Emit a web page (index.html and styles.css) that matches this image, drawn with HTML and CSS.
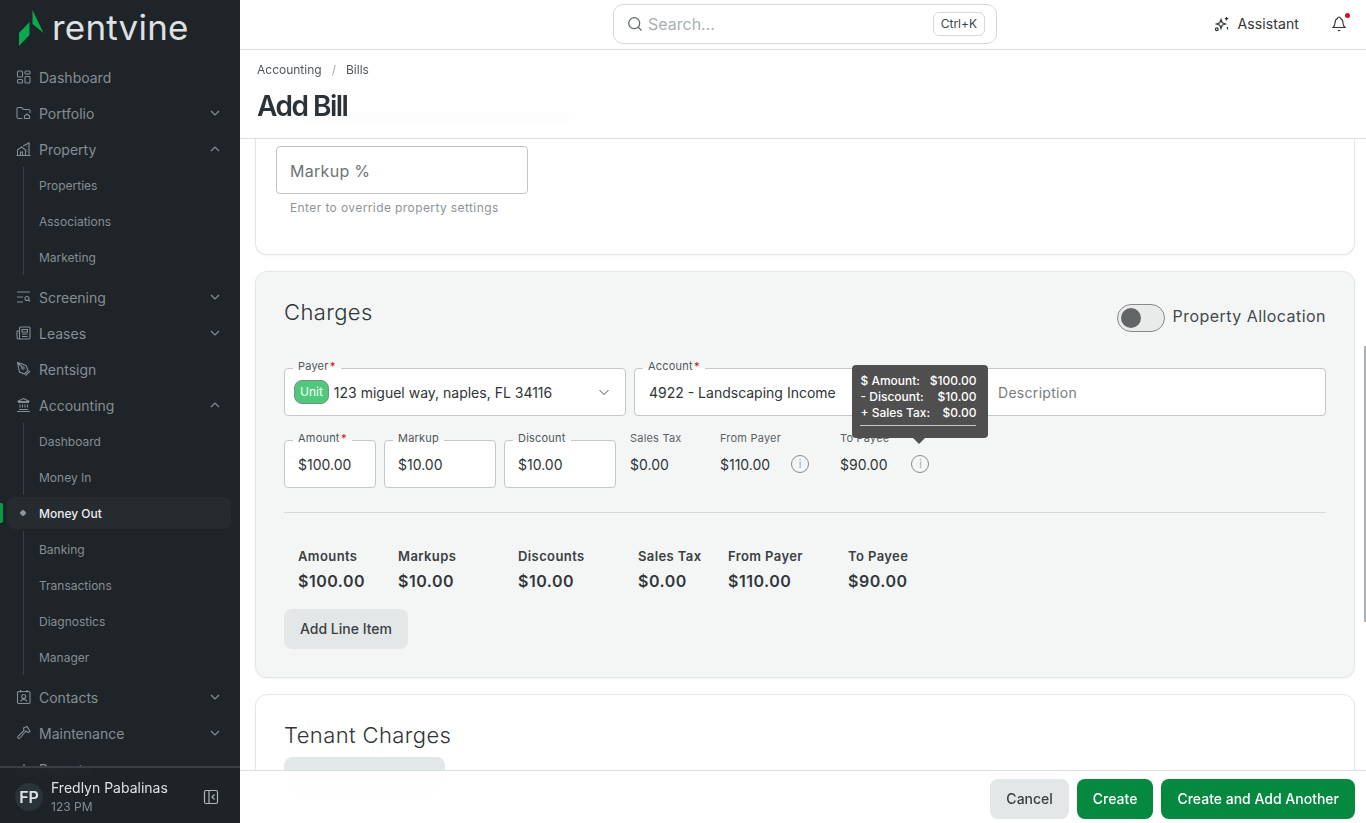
FILE: index.html
```html
<!DOCTYPE html>
<html lang="en">

<head>
    <meta charset="UTF-8">
    <meta name="viewport" content="width=device-width, initial-scale=1.0">
    <title>Add Bill</title>
    <link rel="stylesheet" href="styles.css">
</head>

<body>
    <div class="app">
        <!-- Sidebar -->
        <aside class="sidebar">
            <div class="logo">
                <svg class="logo-mark" viewBox="0 0 26 36" width="26" height="36">
                    <path d="M13.5 0 L24.5 23 L13.5 14 Z M10.5 12 V25 L0 36 V23 Z" fill="#0ba84f" />
                </svg>
                <span class="logo-text">rentvine</span>
            </div>
            <nav class="nav">
                <a class="nav-item">
                    <svg class="nav-icon" viewBox="0 0 16 16"><rect x="1.500" y="2" width="5" height="6" rx="1" /><rect x="9" y="2" width="5" height="3" rx="1" /><rect x="1.500" y="10.500" width="5" height="3.500" rx="1" /><rect x="9" y="7.500" width="5" height="6.500" rx="1" /></svg>
                    Dashboard
                </a>
                <a class="nav-item">
                    <svg class="nav-icon" viewBox="0 0 16 16"><path d="M6.500 13.500H2.500A1.500 1.500 0 0 1 1 12V3.500A1 1 0 0 1 2 2.500H5.500l2 2h5a1.500 1.500 0 0 1 1.500 1.500v2" /><path d="M8.500 11L11 9l2.500 2v2.500h-5z" /></svg>
                    Portfolio
                    <svg class="chevron" viewBox="0 0 12 12"><path d="M2 4l4 4 4-4" /></svg>
                </a>
                <a class="nav-item">
                    <svg class="nav-icon" viewBox="0 0 16 16"><path d="M.5 14.500h14M1.500 14.500V9l4-3 4 3v5.500M13 14.500V2L7 5M4.500 14.500V11h2v3.500M11 5.500v.5M11 8v.5M11 10.500v.5" /></svg>
                    Property
                    <svg class="chevron" viewBox="0 0 12 12"><path d="M2 8l4-4 4 4" /></svg>
                </a>
                <div class="sub-list">
                    <a class="sub-item">Properties</a>
                    <a class="sub-item">Associations</a>
                    <a class="sub-item">Marketing</a>
                </div>
                <a class="nav-item">
                    <svg class="nav-icon" viewBox="0 0 16 16"><path d="M1 3h13M1 8h6M1 13h6" /><circle cx="11" cy="9.500" r="2" /><path d="M12.500 11l1.500 1.500" /></svg>
                    Screening
                    <svg class="chevron" viewBox="0 0 12 12"><path d="M2 4l4 4 4-4" /></svg>
                </a>
                <a class="nav-item">
                    <svg class="nav-icon" viewBox="0 0 16 16"><path d="M3.500 13.500V3a1 1 0 0 1 1-1H13a1 1 0 0 1 1 1v9.500a1.500 1.500 0 0 1-1.500 1.500h-10A1.500 1.500 0 0 1 1 12.500V6h2.500" /><path d="M6 4.500h5.500v2.500H6zM6 9h5.500M6 11.500h5.500" /></svg>
                    Leases
                    <svg class="chevron" viewBox="0 0 12 12"><path d="M2 4l4 4 4-4" /></svg>
                </a>
                <a class="nav-item">
                    <svg class="nav-icon" viewBox="0 0 16 16"><path d="M1.500 1.500l8.500 3 2 5-3.500 3.500-5-2zM1.500 1.500L6 6" /><circle cx="7" cy="7" r="1.200" /><path d="M9.500 14.500L14 10" /></svg>
                    Rentsign
                </a>
                <a class="nav-item">
                    <svg class="nav-icon" viewBox="0 0 16 16"><path d="M1 14.500h13M2 5.500h11M7.500 1.500l6 3h-12zM3 12.500h9M4 7.500v3M6.500 7.500v3M9 7.500v3M11.500 7.500v3" /></svg>
                    Accounting
                    <svg class="chevron" viewBox="0 0 12 12"><path d="M2 8l4-4 4 4" /></svg>
                </a>
                <div class="sub-list">
                    <a class="sub-item">Dashboard</a>
                    <a class="sub-item">Money In</a>
                    <a class="sub-item sub-item--active">Money Out</a>
                    <a class="sub-item">Banking</a>
                    <a class="sub-item">Transactions</a>
                    <a class="sub-item">Diagnostics</a>
                    <a class="sub-item">Manager</a>
                </div>
                <a class="nav-item">
                    <svg class="nav-icon" viewBox="0 0 16 16"><rect x="1.500" y="2.500" width="12.500" height="12" rx="1.200" /><path d="M4.500 1v2.500M11 1v2.500M4.500 12.500c.5-1.500 1.700-2 3.200-2s2.800.5 3.300 2" /><circle cx="7.700" cy="7.500" r="2" /></svg>
                    Contacts
                    <svg class="chevron" viewBox="0 0 12 12"><path d="M2 4l4 4 4-4" /></svg>
                </a>
                <a class="nav-item">
                    <svg class="nav-icon" viewBox="0 0 16 16"><path d="M7.500 3L11 1.500l3 5-2 1-2-1.500-6 7a1.300 1.300 0 0 1-2-1.700l6-5.800z" /></svg>
                    Maintenance
                    <svg class="chevron" viewBox="0 0 12 12"><path d="M2 4l4 4 4-4" /></svg>
                </a>
                <a class="nav-item">
                    <svg class="nav-icon" viewBox="0 0 16 16"><path d="M3 14V8M8 14V3M13 14V6" /></svg>
                    Reports
                </a>
            </nav>
            <div class="user">
                <span class="avatar">FP</span>
                <div class="user-info">
                    <span class="user-name">Fredlyn Pabalinas</span>
                    <span class="user-org">123 PM</span>
                </div>
                <svg class="collapse" viewBox="0 0 16 16"><rect x="1.500" y="1.500" width="13" height="13" rx="1.500" /><path d="M6 1.500v13M11.500 5.500L9 8l2.500 2.500" /></svg>
            </div>
        </aside>

        <main class="main">
            <header class="topbar">
                <div class="search">
                    <svg class="search-icon" viewBox="0 0 16 16"><circle cx="7.200" cy="7.200" r="5.500" /><path d="M11.200 11.200L14.500 14.500" /></svg>
                    <span class="search-text">Search...</span>
                    <kbd class="kbd">Ctrl+K</kbd>
                </div>
                <div class="top-actions">
                    <a class="assistant">
                        <svg class="assistant-icon" viewBox="0 0 16 16"><path d="M7 3.500l1.200 3.300 3.300 1.200-3.300 1.200L7 12.500 5.800 9.200 2.500 8l3.300-1.200z" /><path d="M12.500 1v3.500M10.800 2.700h3.500M13.500 11v2.500" /><circle cx="2.800" cy="13.300" r="1.400" /></svg>
                        Assistant
                    </a>
                    <span class="bell">
                        <svg viewBox="0 0 16 16"><path d="M6.500 2.500a1.500 1.500 0 0 1 3 0c2 .8 2.500 2.500 2.500 4.500 0 2.500.8 3.500 2 4.500H2c1.200-1 2-2 2-4.500 0-2 .5-3.700 2.500-4.500zM6.800 14a1.400 1.400 0 0 0 2.400 0" /></svg>
                        <span class="bell-dot"></span>
                    </span>
                </div>
            </header>

            <div class="page-head">
                <div class="crumbs"><span>Accounting</span><span class="crumb-sep">/</span><span>Bills</span></div>
                <h1>Add Bill</h1>
            </div>

            <div class="content">
                <section class="card card--top">
                    <div class="ghost"></div>
                    <div class="field--markup">Markup %</div>
                    <p class="help">Enter to override property settings</p>
                </section>

                <section class="card card--charges">
                    <div class="charges-head">
                        <h2>Charges</h2>
                        <div class="toggle-wrap">
                            <span class="toggle"><span class="toggle-knob"></span></span>
                            <span class="toggle-text">Property Allocation</span>
                        </div>
                    </div>

                    <div class="row-top">
                        <div class="box box--payer">
                            <label class="box-label">Payer <b>*</b></label>
                            <span class="unit">Unit</span>
                            <span>123 miguel way, naples, FL 34116</span>
                            <svg class="select-arrow" viewBox="0 0 12 12"><path d="M1.500 4l4.500 4.500L10.500 4" /></svg>
                        </div>
                        <div class="box">
                            <label class="box-label">Account <b>*</b></label>
                            <span>4922 - Landscaping Income</span>
                        </div>
                        <div class="box box--desc">Description</div>
                    </div>

                    <div class="row-amounts">
                        <div class="box box--sm box--amount">
                            <label class="box-label">Amount <b>*</b></label>
                            $100.00
                        </div>
                        <div class="box box--sm box--wide">
                            <label class="box-label">Markup</label>
                            $10.00
                        </div>
                        <div class="box box--sm box--wide">
                            <label class="box-label">Discount</label>
                            $10.00
                        </div>
                        <div class="stat stat--tax">
                            <span class="stat-label">Sales Tax</span>
                            <span class="stat-value">$0.00</span>
                        </div>
                        <div class="stat stat--payer">
                            <span class="stat-label">From Payer</span>
                            <span class="stat-value">$110.00<span class="info">i</span></span>
                        </div>
                        <div class="stat stat--payee">
                            <span class="stat-label">To Payee</span>
                            <span class="stat-value">$90.00
                                <span class="info">i
                                    <span class="tooltip">
                                        <span class="tip-row"><span>$ Amount:</span><span>$100.00</span></span>
                                        <span class="tip-row"><span>- Discount:</span><span>$10.00</span></span>
                                        <span class="tip-row"><span>+ Sales Tax:</span><span>$0.00</span></span>
                                    </span>
                                </span>
                            </span>
                        </div>
                    </div>

                    <hr class="divider">

                    <div class="totals">
                        <div class="total total--1"><span>Amounts</span><strong>$100.00</strong></div>
                        <div class="total total--2"><span>Markups</span><strong>$10.00</strong></div>
                        <div class="total total--2"><span>Discounts</span><strong>$10.00</strong></div>
                        <div class="total total--3"><span>Sales Tax</span><strong>$0.00</strong></div>
                        <div class="total total--2"><span>From Payer</span><strong>$110.00</strong></div>
                        <div class="total"><span>To Payee</span><strong>$90.00</strong></div>
                    </div>

                    <button class="btn btn--grey btn--line" type="button">Add Line Item</button>
                </section>

                <section class="card card--tenant">
                    <h2>Tenant Charges</h2>
                    <button class="btn btn--grey btn--ghost" type="button"></button>
                </section>
            </div>

            <span class="scroll-thumb"></span>

            <footer class="bottom-bar">
                <button class="btn btn--grey" type="button">Cancel</button>
                <button class="btn btn--green" type="button">Create</button>
                <button class="btn btn--green" type="button">Create and Add Another</button>
            </footer>
        </main>
    </div>
</body>

</html>
```

FILE: styles.css
```css
* {
    box-sizing: border-box;
}

body {
    margin: 0;
    font-family: Inter, "Liberation Sans", sans-serif;
    color: #2f3437;
    background-color: #ffffff;
}

.app {
    display: flex;
    height: 823px;
    overflow: hidden;
}

/* Sidebar */
.sidebar {
    position: relative;
    display: flex;
    flex-direction: column;
    flex: 0 0 240px;
    height: 100%;
    overflow: hidden;
    background-color: #1e2428;
    color: #868e94;
}

.logo {
    display: flex;
    align-items: flex-start;
    flex: 0 0 59px;
    padding: 10px 0 0 19px;
}

.logo-mark {
    flex: none;
}

.logo-text {
    margin: -3px 0 0 7px;
    font-size: 35px;
    line-height: 40px;
    font-weight: 400;
    letter-spacing: 0.2px;
    color: #dde1e3;
}

.nav-item {
    display: flex;
    align-items: center;
    height: 36px;
    padding-left: 16px;
    font-size: 14px;
}

.nav-icon {
    flex: none;
    width: 16px;
    height: 16px;
    margin-right: 7px;
    fill: none;
    stroke: currentColor;
    stroke-width: 1.1;
}

.chevron {
    width: 12px;
    height: 12px;
    margin-left: auto;
    margin-right: 19px;
    fill: none;
    stroke: currentColor;
    stroke-width: 1.2;
}

.sub-list {
    margin-bottom: 4px;
}

.sub-item {
    position: relative;
    display: flex;
    align-items: center;
    height: 36px;
    padding-left: 39px;
    font-size: 12px;
}

.sub-item::before {
    content: "";
    position: absolute;
    left: 23px;
    top: 0;
    bottom: 0;
    border-left: 1px solid #394045;
}

/* current page: rounded row with dot, green mark at the edge */
.sub-item--active {
    z-index: 0;
    color: #eceef0;
    font-weight: 500;
}

.sub-item--active::before {
    z-index: -1;
    left: 7px;
    top: 2px;
    bottom: 2px;
    width: 224px;
    border-left: 0;
    border-radius: 8px;
    background: radial-gradient(circle at 16px 16px, #8b9298 2.500px, transparent 3px), #262b30;
}

.sub-item--active::after {
    content: "";
    position: absolute;
    left: 0;
    top: 8px;
    width: 3px;
    height: 20px;
    border-radius: 0 2px 2px 0;
    background-color: #0a9b49;
}

.user {
    position: absolute;
    left: 0;
    right: 0;
    bottom: 0;
    display: flex;
    align-items: center;
    height: 57px;
    padding: 3px 21px 0 15px;
    border-top: 2px solid #3a3f43;
    background-color: rgba(30, 36, 40, 0.93);
    backdrop-filter: blur(4px);
    color: #dfe2e4;
}

.avatar {
    display: flex;
    align-items: center;
    justify-content: center;
    width: 28px;
    height: 28px;
    margin-right: 8px;
    border-radius: 50%;
    background-color: #2a3337;
    font-size: 16px;
    font-weight: 600;
}

.user-info {
    display: flex;
    flex-direction: column;
    flex: 1;
    padding-top: 1px;
}

.user-name {
    font-size: 14px;
    line-height: 16px;
}

.user-org {
    margin-top: 3px;
    font-size: 12px;
    line-height: 16px;
    color: #868e94;
}

.collapse {
    width: 16px;
    height: 16px;
    fill: none;
    stroke: #aeb4b8;
    stroke-width: 1.2;
}

/* Main column */
.main {
    position: relative;
    display: flex;
    flex-direction: column;
    flex: 1;
    min-width: 0;
    height: 100%;
    overflow: hidden;
}

.topbar {
    position: relative;
    display: flex;
    align-items: center;
    justify-content: center;
    flex: 0 0 50px;
    padding-bottom: 1px;
    border-bottom: 1px solid #dcdfe0;
    background-color: #ffffff;
}

.search {
    display: flex;
    align-items: center;
    width: 384px;
    height: 40px;
    margin-left: 4px;
    padding: 0 11px 0 13px;
    border: 1px solid #d5d8da;
    border-radius: 10px;
}

.search-icon {
    width: 16px;
    height: 16px;
    margin-right: 5px;
    fill: none;
    stroke: #5b6266;
    stroke-width: 1.2;
}

.search-text {
    flex: 1;
    font-size: 16px;
    color: #a9afb2;
}

.kbd {
    padding: 4px 7px;
    border: 1px solid #d5d8da;
    border-radius: 6px;
    font-family: inherit;
    font-size: 12px;
    line-height: 14px;
    color: #3c4246;
}

.top-actions {
    position: absolute;
    right: 19px;
    top: 0;
    bottom: 2px;
    display: flex;
    align-items: center;
    gap: 32px;
}

.assistant {
    display: flex;
    align-items: center;
    gap: 8px;
    font-size: 14px;
    letter-spacing: 0.1px;
}

.assistant-icon {
    width: 16px;
    height: 16px;
    fill: none;
    stroke: #2f3437;
    stroke-width: 1.2;
}

.bell {
    position: relative;
    display: block;
    width: 16px;
    height: 16px;
}

.bell svg {
    display: block;
    width: 16px;
    height: 16px;
    fill: none;
    stroke: #2f3437;
    stroke-width: 1.1;
}

.bell-dot {
    position: absolute;
    right: -3px;
    top: -3px;
    width: 5px;
    height: 5px;
    border-radius: 50%;
    background-color: #d3111c;
}

.page-head {
    position: absolute;
    left: 0;
    right: 0;
    top: 50px;
    z-index: 2;
    height: 89px;
    padding: 12px 17px 0;
    border-bottom: 1px solid #dcdfe0;
    background-color: rgba(255, 255, 255, 0.95);
    backdrop-filter: blur(4px);
}

.crumbs {
    display: flex;
    gap: 10px;
    font-size: 12px;
    line-height: 16px;
    color: #50575b;
}

.crumb-sep {
    color: #a3a9ac;
}

h1 {
    margin: 10px 0 0;
    font-size: 28px;
    line-height: 36px;
    font-weight: 600;
    letter-spacing: -1.500px;
    color: #2b3238;
}

/* Cards */
.content {
    display: flex;
    flex-direction: column;
    gap: 16px;
    padding: 0 11px 0 15px;
}

.card {
    border: 1px solid #e3e5e6;
    border-radius: 12px;
    background-color: #ffffff;
    box-shadow: 0 1px 2px rgba(0, 0, 0, 0.05);
}

h2 {
    margin: 0;
    font-size: 22px;
    line-height: 28px;
    font-weight: 300;
    letter-spacing: 0.4px;
    color: #2f3437;
}

.card--top {
    flex: none;
    height: 205px;
    padding: 64px 0 0 20px;
    border-top: 0;
    border-radius: 0 0 12px 12px;
}

/* field above the fold, only a smudge shows through the blurred header */
.ghost {
    width: 270px;
    height: 8px;
    margin: 0 0 24px 24px;
    border-radius: 4px;
    background-color: #a9aeb2;
}

.field--markup {
    display: flex;
    align-items: center;
    width: 252px;
    height: 48px;
    padding: 2px 0 0 13px;
    border: 1px solid #bfc3c5;
    border-radius: 4px;
    font-size: 16px;
    letter-spacing: 0.3px;
    color: #6d7377;
}

.help {
    margin: 6px 0 0 14px;
    font-size: 12px;
    line-height: 16px;
    letter-spacing: 0.4px;
    color: #8d9396;
}

.card--charges {
    flex: none;
    height: 407px;
    padding: 26px 28px 0;
    background-color: #f4f6f6;
}

.charges-head {
    display: flex;
    align-items: flex-start;
    justify-content: space-between;
    height: 70px;
}

.toggle-wrap {
    display: flex;
    align-items: center;
    gap: 8px;
    margin-top: 6px;
    font-size: 16px;
    letter-spacing: 0.45px;
    color: #44494c;
}

.toggle-text {
    margin-bottom: 4px;
}

.toggle {
    display: block;
    width: 48px;
    height: 28px;
    padding: 3px;
    border: 1px solid #85898b;
    border-radius: 14px;
    background-color: #e9ebeb;
}

.toggle-knob {
    display: block;
    width: 20px;
    height: 20px;
    border-radius: 50%;
    background-color: #616567;
}

.row-top {
    display: grid;
    grid-template-columns: repeat(3, 1fr);
    gap: 8px;
}

.box {
    position: relative;
    display: flex;
    align-items: center;
    height: 48px;
    padding-left: 14px;
    border: 1px solid #c4c8ca;
    border-radius: 4px;
    background-color: #ffffff;
    font-size: 14px;
    color: #2f3437;
}

.box--payer {
    padding-left: 9px;
}

.box--desc {
    padding-left: 13px;
    letter-spacing: 0.3px;
    color: #777d81;
}

.box-label {
    position: absolute;
    left: 8px;
    top: -11px;
    padding: 0 5px;
    background: linear-gradient(#f4f6f6 62%, #ffffff 62%);
    font-size: 11px;
    line-height: 16px;
    letter-spacing: 0.2px;
    color: #50565a;
}

.box-label b {
    margin-left: -2px;
    font-weight: 500;
    color: #c8161d;
}

.unit {
    margin-right: 5px;
    padding: 0 5px;
    height: 24px;
    border: 1px solid #7f8d85;
    border-radius: 8px;
    background-color: #4fc97c;
    font-size: 12px;
    line-height: 22px;
    color: #ffffff;
}

.select-arrow {
    position: absolute;
    right: 15px;
    top: 17px;
    width: 12px;
    height: 12px;
    fill: none;
    stroke: #4b5155;
    stroke-width: 1;
}

.row-amounts {
    display: flex;
    gap: 8px;
    margin-top: 24px;
}

.box--sm {
    padding-left: 13px;
}

.box--amount {
    width: 92px;
}

.box--wide {
    width: 112px;
}

.stat {
    display: flex;
    flex-direction: column;
    margin-top: -10px;
}

.stat--tax {
    width: 82px;
    margin-left: 6px;
}

.stat--payer {
    width: 112px;
}

.stat-label {
    font-size: 11px;
    line-height: 16px;
    letter-spacing: 0.2px;
    color: #5b6165;
}

.stat-value {
    display: flex;
    align-items: center;
    gap: 21px;
    margin-top: 5px;
    height: 26px;
    font-size: 14px;
}

.stat--payee .stat-value {
    gap: 24px;
}

.info {
    position: relative;
    display: flex;
    align-items: center;
    justify-content: center;
    width: 18px;
    height: 18px;
    border: 1px solid #888d90;
    border-radius: 50%;
    font-size: 11px;
    color: #a9aeb1;
}

.tooltip {
    position: absolute;
    left: -60px;
    top: -91px;
    display: block;
    width: 136px;
    height: 73px;
    padding: 8px 12px 0 8px;
    border-radius: 4px;
    background-color: #4f4f4f;
    font-size: 12px;
    line-height: 16px;
    font-weight: 500;
    color: #ffffff;
}

.tooltip::before {
    content: "";
    display: block;
    position: absolute;
    left: 8px;
    right: 12px;
    top: 60px;
    border-top: 1px solid #c9c9c9;
}

.tooltip::after {
    content: "";
    position: absolute;
    left: 61px;
    bottom: -6px;
    border-left: 6px solid transparent;
    border-right: 6px solid transparent;
    border-top: 6px solid #4f4f4f;
}

.tip-row {
    display: flex;
    justify-content: space-between;
}

.divider {
    margin: 24px 0 0;
    border: 0;
    border-top: 1px solid #d7dadb;
}

.totals {
    display: flex;
    padding: 35px 0 0 14px;
}

.total {
    display: flex;
    flex-direction: column;
    gap: 7px;
    width: 100px;
}

.total--2 {
    width: 120px;
}

.total--3 {
    width: 90px;
}

.total--1 {
    width: 100px;
}

.total span {
    font-size: 13px;
    line-height: 16px;
    font-weight: 600;
    letter-spacing: 0.4px;
    color: #3b4043;
}

.total strong {
    font-size: 16px;
    line-height: 20px;
    font-weight: 600;
    letter-spacing: 0.5px;
    color: #33383b;
}

/* Buttons */
.btn {
    height: 40px;
    padding: 0 16px 2px;
    border: none;
    border-radius: 8px;
    font-family: inherit;
    font-size: 14px;
    font-weight: 500;
    cursor: pointer;
}

.btn--grey {
    background-color: #e4e7e8;
    color: #3a3f42;
}

.btn--green {
    background-color: #058840;
    color: #ffffff;
}

.btn--line {
    margin-top: 18px;
}

.card--tenant {
    flex: none;
    height: 140px;
    padding: 26px 28px 0;
}

.btn--ghost {
    display: block;
    width: 161px;
    margin-top: 8px;
}

.scroll-thumb {
    position: absolute;
    right: 0;
    top: 346px;
    width: 2px;
    height: 276px;
    background-color: #a9b2b5;
}

.bottom-bar {
    position: absolute;
    left: 0;
    right: 0;
    bottom: 0;
    z-index: 2;
    display: flex;
    justify-content: flex-end;
    gap: 8px;
    height: 53px;
    padding: 8px 11px 0 0;
    border-top: 1px solid #dcdfe0;
    background-color: rgba(255, 255, 255, 0.95);
    backdrop-filter: blur(4px);
}
```
